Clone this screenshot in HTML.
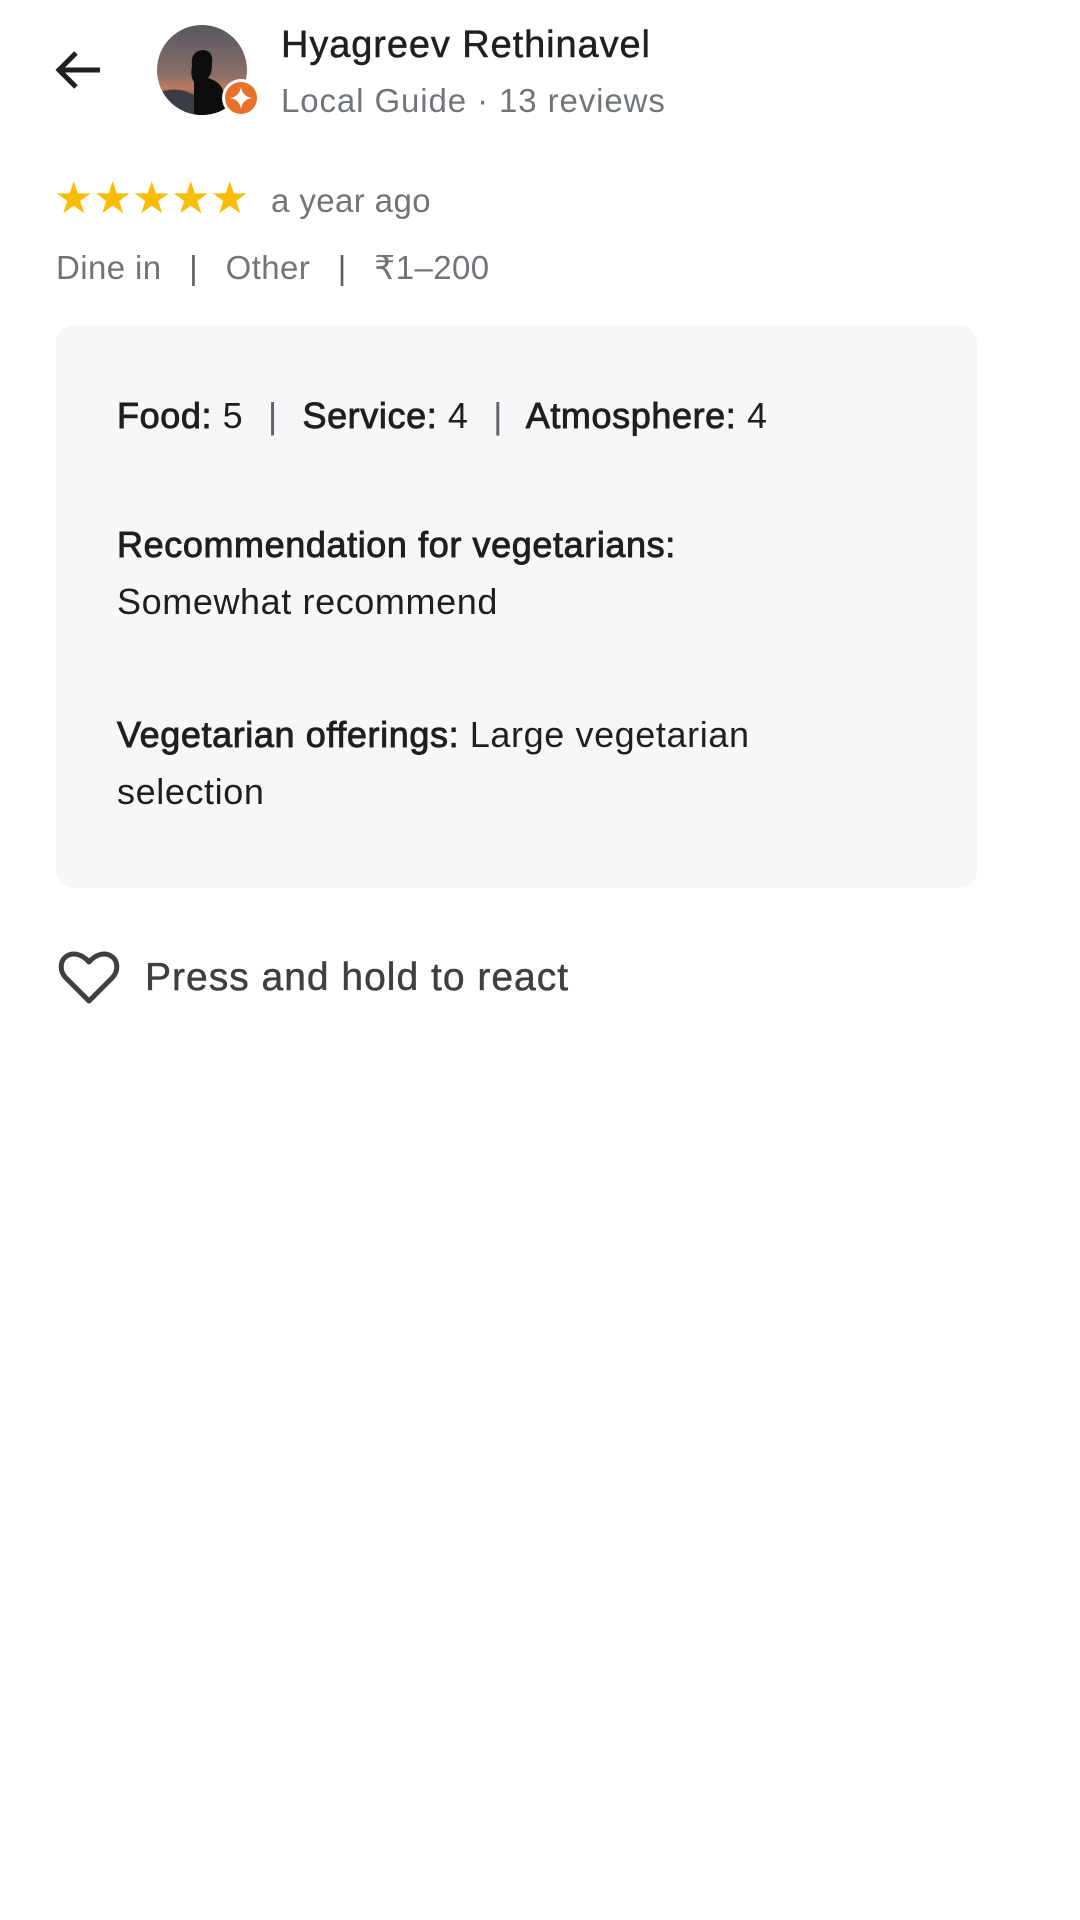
<!DOCTYPE html>
<html><head><meta charset="utf-8"><style>
*{margin:0;padding:0;box-sizing:border-box}
body{width:1080px;height:1920px;background:#fff;font-family:"Liberation Sans",sans-serif;position:relative;overflow:hidden}
.a{position:absolute;white-space:nowrap}
.g{color:#70757a;font-size:33px;letter-spacing:0.4px}
.card{position:absolute;left:56px;top:325px;width:921px;height:563px;background:#f6f7f9;border-radius:18px}
.t{font-size:36px;color:#1f1f1f;line-height:57px;letter-spacing:0.6px}
b{font-weight:normal;-webkit-text-stroke:0.9px #1f1f1f}
.sep{color:#5f6368;margin:0 14px}
.st{display:inline-block;width:39px;text-align:center}
</style></head><body>
<svg class="a" style="left:52px;top:46px" width="54" height="48" viewBox="0 0 54 48"><path d="M48 24H8M24 7L7 24l17 17" fill="none" stroke="#1f1f1f" stroke-width="5"/></svg>
<svg class="a" style="left:156px;top:24px" width="106" height="96" viewBox="0 0 106 96">
<defs><clipPath id="c"><circle cx="46" cy="46" r="45"/></clipPath><linearGradient id="sk" x1="0" y1="0" x2="0" y2="1"><stop offset="0" stop-color="#55575f"/><stop offset=".55" stop-color="#8a6f6a"/><stop offset=".7" stop-color="#c07a5c"/><stop offset="1" stop-color="#2a2c30"/></linearGradient></defs>
<g clip-path="url(#c)"><rect width="92" height="92" fill="url(#sk)"/><path d="M0 70 Q20 60 40 72 L40 92 L0 92Z" fill="#3a3e44"/><path d="M38 92 L38 58 Q34 52 36 42 Q34 28 46 26 Q58 26 56 40 Q56 50 52 54 Q66 58 68 70 L74 92Z" fill="#0d0d0d"/></g>
<circle cx="85" cy="74" r="19" fill="#fff"/><circle cx="85" cy="74" r="16" fill="#e8712a"/>
<path d="M85 63 Q86.5 72.5 96 74 Q86.5 75.5 85 85 Q83.5 75.5 74 74 Q83.5 72.5 85 63Z" fill="#fff"/>
</svg>
<div class="a" style="left:281px;top:24px;font-size:38px;color:#1f1f1f;letter-spacing:0.9px;-webkit-text-stroke:0.5px #1f1f1f">Hyagreev Rethinavel</div>
<div class="a g" style="left:281px;top:82px;letter-spacing:0.9px">Local Guide · 13 reviews</div>
<div class="a" style="left:54px;top:176px;font-size:44px;color:#fbbc04;line-height:46px"><span class="st">★</span><span class="st">★</span><span class="st">★</span><span class="st">★</span><span class="st">★</span></div>
<div class="a g" style="left:271px;top:182px">a year ago</div>
<div class="a g" style="left:56px;top:248px">Dine in <span class="sep" style="margin:0 18px">|</span> Other <span class="sep" style="margin:0 18px">|</span> ₹1–200</div>
<div class="card"></div>
<div class="a t" style="left:117px;top:387px"><b>Food:</b> 5 <span class="sep">|</span> <b>Service:</b> 4 <span class="sep">|</span> <b>Atmosphere:</b> 4</div>
<div class="a t" style="left:117px;top:516px"><b>Recommendation for vegetarians:</b><br>Somewhat recommend</div>
<div class="a t" style="left:117px;top:706px"><b>Vegetarian offerings:</b> Large vegetarian<br>selection</div>
<svg class="a" style="left:58px;top:951px" width="62" height="54" viewBox="0 0 62 54"><path d="M31 50L8 27C1 20 2 9 9 5c6-4 15-2 22 6c7-8 16-10 22-6c7 4 8 15 1 22Z" fill="none" stroke="#3c4043" stroke-width="5" stroke-linejoin="round"/></svg>
<div class="a" style="left:145px;top:956px;font-size:39px;color:#3c4043;letter-spacing:1px;-webkit-text-stroke:0.5px #3c4043">Press and hold to react</div>
</body></html>
